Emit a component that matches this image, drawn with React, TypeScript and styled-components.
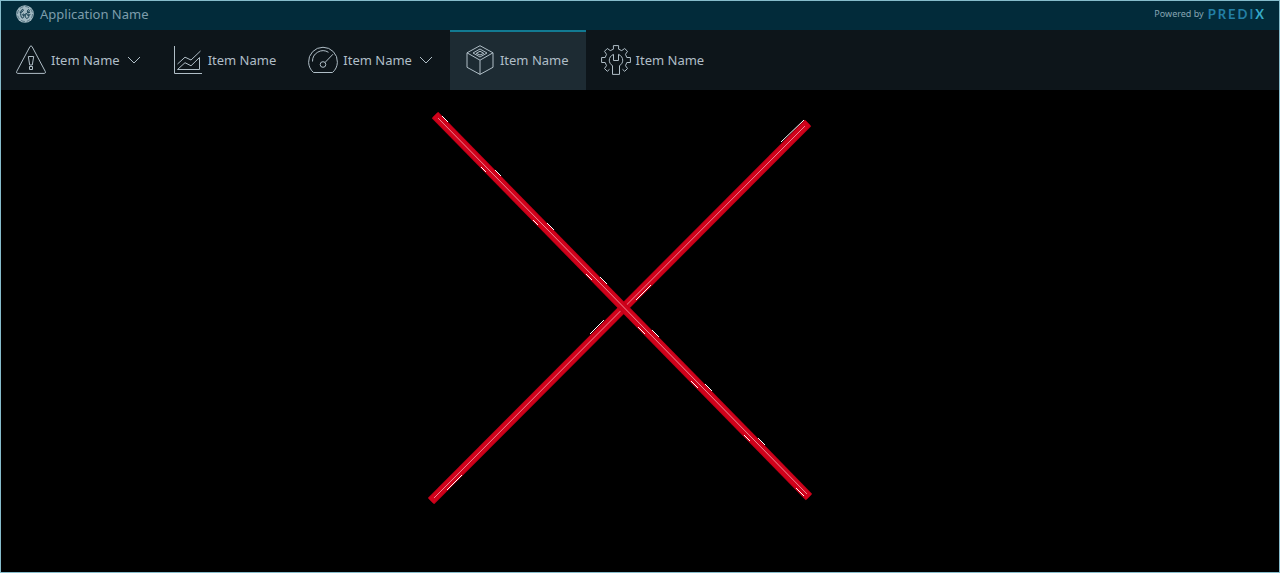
import React from "react";
import styled, { createGlobalStyle, css } from "styled-components";

const GlobalStyle = createGlobalStyle`
  *, *::before, *::after { box-sizing: border-box; }
  body {
    margin: 0;
    background: #000;
    font-family: "Noto Sans", sans-serif;
    font-size: 13px;
    line-height: 20px;
  }
`;

const Frame = styled.div`
  display: flex;
  flex-direction: column;
  min-height: 100vh;
  border: 1px solid #86bccb;
  background: #000;
`;

const Header = styled.header`
  display: flex;
  align-items: center;
  justify-content: space-between;
  height: 29px;
  padding: 0 13px 4px 15px;
  background: #022b3a;
`;

const Brand = styled.div`
  display: flex;
  align-items: center;
  gap: 6px;
  color: #7d9dab;
`;

const AppTitle = styled.h1`
  margin: 0;
  font-size: 13px;
  font-weight: 400;
`;

const Powered = styled.div`
  display: flex;
  align-items: center;
  gap: 4px;
  color: #86a5b2;
  font-size: 9px;
`;

const Nav = styled.nav`
  display: flex;
  height: 60px;
  background: #0d151a;
`;

const NavItem = styled.button<{ $active?: boolean }>`
  display: flex;
  align-items: center;
  gap: 5px;
  padding: 0 17px 2px 15px;
  border: 0;
  border-top: 2px solid transparent;
  background: transparent;
  color: #b0bec7;
  font: inherit;
  white-space: nowrap;
  cursor: pointer;
  ${({ $active }) =>
    $active &&
    css`
      border-top-color: #127a92;
      background: #1d2b33;
    `}
`;

const Icon = styled.svg`
  flex: none;
  width: 30px;
  height: 30px;
  fill: none;
  stroke: currentColor;
  stroke-width: 1;
  stroke-linejoin: round;
`;

const Chevron = styled.svg`
  flex: none;
  width: 14px;
  height: 8px;
  margin-left: 2px;
  fill: none;
  stroke: currentColor;
`;

const Main = styled.main`
  display: flex;
  flex: 1;
  justify-content: center;
  padding: 22px 40px 0 0;
`;

const WarningIcon = () => (
  <Icon viewBox="0 0 30 30" aria-hidden="true">
    <path d="M14 1.5Q15 .2 16 1.5L29.3 26.5Q29.8 28.3 28.5 28.4H1.5Q.2 28.3 .7 26.5Z" />
    <path d="M12.3 11.5H17.7L16.3 20H13.7ZM13.5 21.5H16.5V24.5H13.5Z" />
  </Icon>
);

const ChartIcon = () => (
  <Icon viewBox="0 0 30 30" aria-hidden="true">
    <path d="M1.5 1V28.5H29" />
    <path d="M4.5 19L12 12.2L18 15L27.5 6" />
    <path d="M4.5 24.5L12 17.7L18 20.8L26.5 12.5V24.5Z" />
  </Icon>
);

const GaugeIcon = () => (
  <Icon viewBox="0 0 30 30" aria-hidden="true">
    <path d="M5.5 27.5A14.4 14.4 0 1 1 24.5 27.5Z" />
    <path d="M4.5 16.5A10.5 10.5 0 0 1 20.5 7.3M17 17.5L25 9.2" />
    <circle cx="15" cy="19.5" r="2.8" />
  </Icon>
);

const CubeIcon = () => (
  <Icon viewBox="0 0 30 30" aria-hidden="true">
    <path d="M15 .7L28 7.8V22.3L15 29.4L2 22.3V7.8ZM2 7.8L15 15.2L28 7.8M15 15.2V29.4" />
    <path d="M15 4L22 8L15 12L8 8ZM15 6.2L18.8 8.4L15 10L11.2 8.4Z" />
  </Icon>
);

const GearIcon = () => (
  <Icon viewBox="0 0 30 30" aria-hidden="true">
    <path d="M8.5 24.3L6.3 26.3L3.5 23.5L5.5 20.7L4.2 17.5H.6V12.5H4.2L5.5 9.3L3.5 6.3L6.3 3.5L9.3 5.6L12.4 4.2V.6H17.6V4.2L20.7 5.6L23.7 3.5L26.5 6.3L24.5 9.3L25.8 12.5H29.4V17.5H25.8L24.5 20.7L26.5 23.5L23.7 26.3L21.5 24.3" />
    <path d="M12.5 9.4V15.5H17.5V9.4C23.2 11.8 22.7 18.5 18.5 20.6V29.4H11.5V20.6C7.3 18.5 6.8 11.8 12.5 9.4Z" />
  </Icon>
);

const GeLogo = () => (
  <svg width="18" height="18" viewBox="0 0 18 18" aria-hidden="true">
    <circle cx="9" cy="9" r="8.8" fill="#a2b9c2" />
    <circle cx="9" cy="9" r="7.5" fill="none" stroke="#36596a" strokeWidth=".7" strokeDasharray="4 1.9" />
    <g fill="none" stroke="#123b4c" strokeWidth="1" strokeLinecap="round">
      <path d="M4 7.3C5.2 7.9 7.5 6.5 7.3 4.9C7 3.4 4.7 4.6 4.7 8.5C4.7 12.8 6.6 14 7.5 12.3C8.3 10.9 8.3 9 7.5 9C6.5 9 6.2 10.4 7.1 10.5C8.2 10.5 9 9.7 9.5 8.8" />
      <path d="M13.8 7.3C12.8 8.4 10.8 7.8 11.5 5.5C12.2 3.8 13.8 4.6 13.1 6.2C12.5 7.7 9.7 8.1 9.4 10.7C9.2 13.3 11 14.2 12.2 12.6C13.2 11.1 13.4 9.5 12.4 9.2C11.3 9 11.1 10.5 12 10.6C13 10.6 13.6 10.1 14 9.3" />
    </g>
  </svg>
);

const Wordmark = styled.span`
  color: #237fa5;
  font-family: Lato, sans-serif;
  font-size: 13px;
  font-weight: 700;
  letter-spacing: 2px;
`;

const WordmarkAccent = styled.span`
  color: #35a9c8;
`;

const items = [
  { icon: <WarningIcon />, menu: true },
  { icon: <ChartIcon /> },
  { icon: <GaugeIcon />, menu: true },
  { icon: <CubeIcon />, active: true },
  { icon: <GearIcon /> },
];

const CrossDrawing = () => (
  <svg width="384" height="392" viewBox="0 0 384 392" role="img" aria-label="Crossed out">
    <g fill="none">
      <path d="M3 389L380 11" stroke="#c00018" strokeWidth="9" />
      <path d="M3 389L380 11" stroke="#d0021b" strokeWidth="7" />
      <path d="M6 386L377 14" stroke="#ee8796" />
      <path d="M353 30L376 8M19 378L34 363M162 222L176 208M208 188L223 173" stroke="#fff" />
      <path d="M7 3L381 385" stroke="#c00018" strokeWidth="9" />
      <path d="M7 3L381 385" stroke="#d0021b" strokeWidth="7" />
      <path d="M10 6L379 382" stroke="#ee8796" />
      <path d="M14 4L20 10M53 55L58 60M67 58L73 64M105 108L110 113M119 111L126 118M158 162L164 168M172 165L179 172M210 215L217 222M224 218L231 225M263 269L270 276M277 272L284 279M316 323L322 329M330 326L337 333M368 376L376 384" stroke="#fff" />
    </g>
  </svg>
);

export default function App() {
  return (
    <Frame>
      <GlobalStyle />
      <Header>
        <Brand>
          <GeLogo />
          <AppTitle>Application Name</AppTitle>
        </Brand>
        <Powered>
          Powered by
          <Wordmark>
            PREDI<WordmarkAccent>X</WordmarkAccent>
          </Wordmark>
        </Powered>
      </Header>
      <Nav aria-label="Main">
        {items.map((item, i) => (
          <NavItem
            key={i}
            type="button"
            $active={item.active}
            aria-current={item.active ? "page" : undefined}
            aria-haspopup={item.menu ? "menu" : undefined}
          >
            {item.icon}
            <span>Item Name</span>
            {item.menu && (
              <Chevron viewBox="0 0 14 8" aria-hidden="true">
                <path d="M1 1L7 7L13 1" />
              </Chevron>
            )}
          </NavItem>
        ))}
      </Nav>
      <Main>
        <CrossDrawing />
      </Main>
    </Frame>
  );
}
